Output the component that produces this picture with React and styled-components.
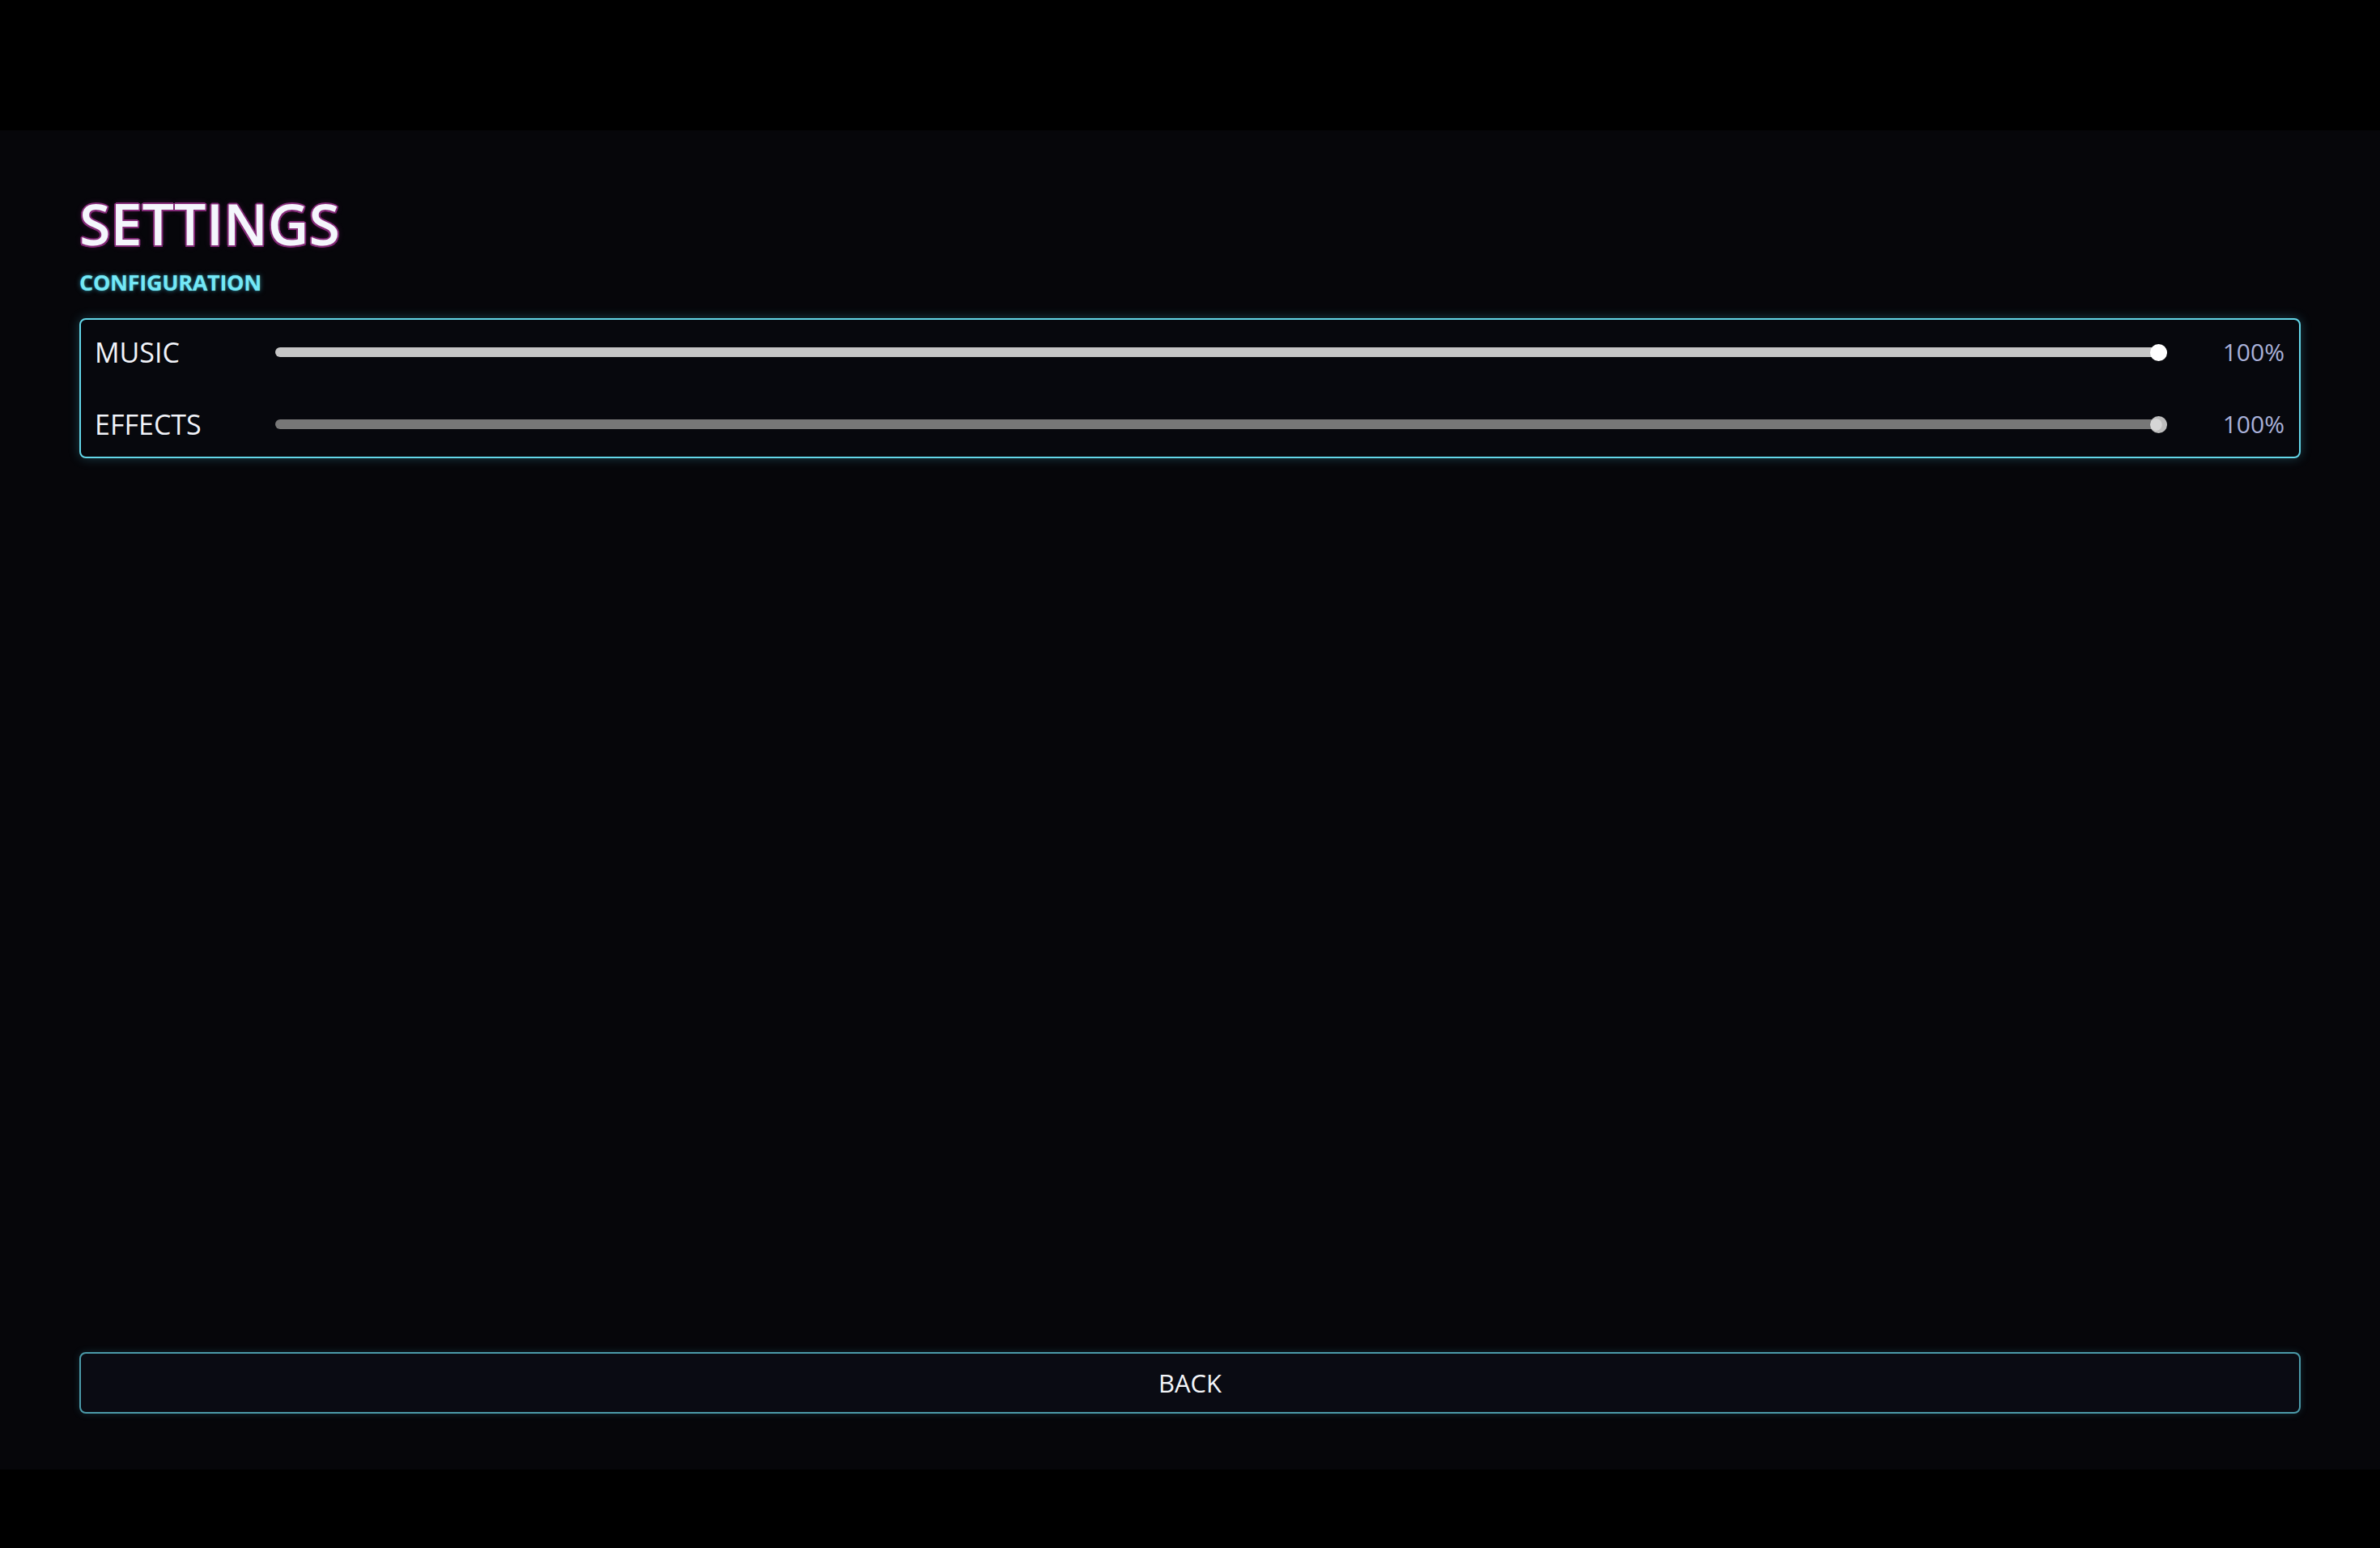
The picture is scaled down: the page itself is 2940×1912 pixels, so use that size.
import React, { useState } from "react";
import styled, { createGlobalStyle } from "styled-components";

const GlobalStyle = createGlobalStyle`
    html, body {
        margin: 0;
        padding: 0;
        background: #000;
    }
    body {
        font-family: "Open Sans", "Noto Sans", sans-serif;
        color: #f2f4fa;
    }
`;

const Letterbox = styled.div`
    width: 100%;
    height: 1912px;
    padding-top: 161px;
    box-sizing: border-box;
    background: #000;
`;

const Screen = styled.main`
    height: 1654px;
    box-sizing: border-box;
    padding: 80px 98px 69px 98px;
    background: #06060a;
    display: flex;
    flex-direction: column;
`;

const Title = styled.h1`
    margin: 0;
    font-size: 70px;
    line-height: 1;
    font-weight: 600;
    color: #f4f6fc;
    text-shadow:
        2px 0 0 #842a78,
        -2px 0 0 #842a78,
        0 2px 0 #842a78,
        0 -2px 0 #842a78,
        1.5px 1.5px 0 #842a78,
        -1.5px 1.5px 0 #842a78,
        1.5px -1.5px 0 #842a78,
        -1.5px -1.5px 0 #842a78,
        0 0 8px rgba(200, 60, 180, 0.3);
`;

const Subtitle = styled.h2`
    margin: 24px 0 0 0;
    font-size: 27px;
    line-height: 1;
    font-weight: 700;
    letter-spacing: -0.3px;
    color: #74e8f6;
    text-shadow:
        0 0 2px #2a8a9a,
        0 0 6px rgba(80, 210, 235, 0.5);
`;

const Panel = styled.section`
    margin-top: 31px;
    border: 2px solid #63d6e8;
    border-radius: 8px;
    background: #07080d;
    box-shadow: 0 0 14px rgba(80, 200, 225, 0.28);
    padding: 8px 18px 8px 17px;
    display: flex;
    flex-direction: column;
    gap: 25px;
`;

const Row = styled.div`
    height: 64px;
    display: grid;
    grid-template-columns: 223px 1fr 145px;
    align-items: center;
`;

const Label = styled.span`
    font-size: 34px;
    line-height: 1;
    color: #f2f4fa;
`;

const Track = styled.div`
    position: relative;
    height: 12px;
    border-radius: 6px;
    background: ${(p) => p.$color};
`;

const Thumb = styled.div`
    position: absolute;
    top: 50%;
    width: 21px;
    height: 21px;
    margin-top: -10.5px;
    margin-left: -21px;
    border-radius: 50%;
    background: ${(p) =>
        p.$active
            ? "#ffffff"
            : "radial-gradient(circle at 35% 50%, #d6d6d6 0 40%, #bdbdbd 45%)"};
`;

const Percent = styled.span`
    font-size: 30px;
    line-height: 1;
    text-align: right;
    color: #a9b1d9;
`;

const BackButton = styled.button`
    margin-top: auto;
    height: 76px;
    width: 100%;
    border: 2px solid #4b9aa9;
    border-radius: 8px;
    background: #0a0b13;
    box-shadow: 0 0 10px rgba(70, 160, 180, 0.22);
    color: #f4f6fa;
    font-family: "Open Sans", "Noto Sans", sans-serif;
    font-size: 31px;
    cursor: pointer;
`;

function Slider({ value, active }) {
    return (
        <Track $color={active ? "#c6c6c6" : "#777777"}>
            <Thumb $active={active} style={{ left: `${value}%` }} />
        </Track>
    );
}

export default function App() {
    const [volumes] = useState([
        { name: "MUSIC", value: 100, active: true },
        { name: "EFFECTS", value: 100, active: false },
    ]);

    return (
        <>
            <GlobalStyle />
            <Letterbox>
                <Screen>
                    <Title>SETTINGS</Title>
                    <Subtitle>CONFIGURATION</Subtitle>
                    <Panel>
                        {volumes.map(({ name, value, active }) => (
                            <Row key={name}>
                                <Label>{name}</Label>
                                <Slider value={value} active={active} />
                                <Percent>{value}%</Percent>
                            </Row>
                        ))}
                    </Panel>
                    <BackButton>BACK</BackButton>
                </Screen>
            </Letterbox>
        </>
    );
}
